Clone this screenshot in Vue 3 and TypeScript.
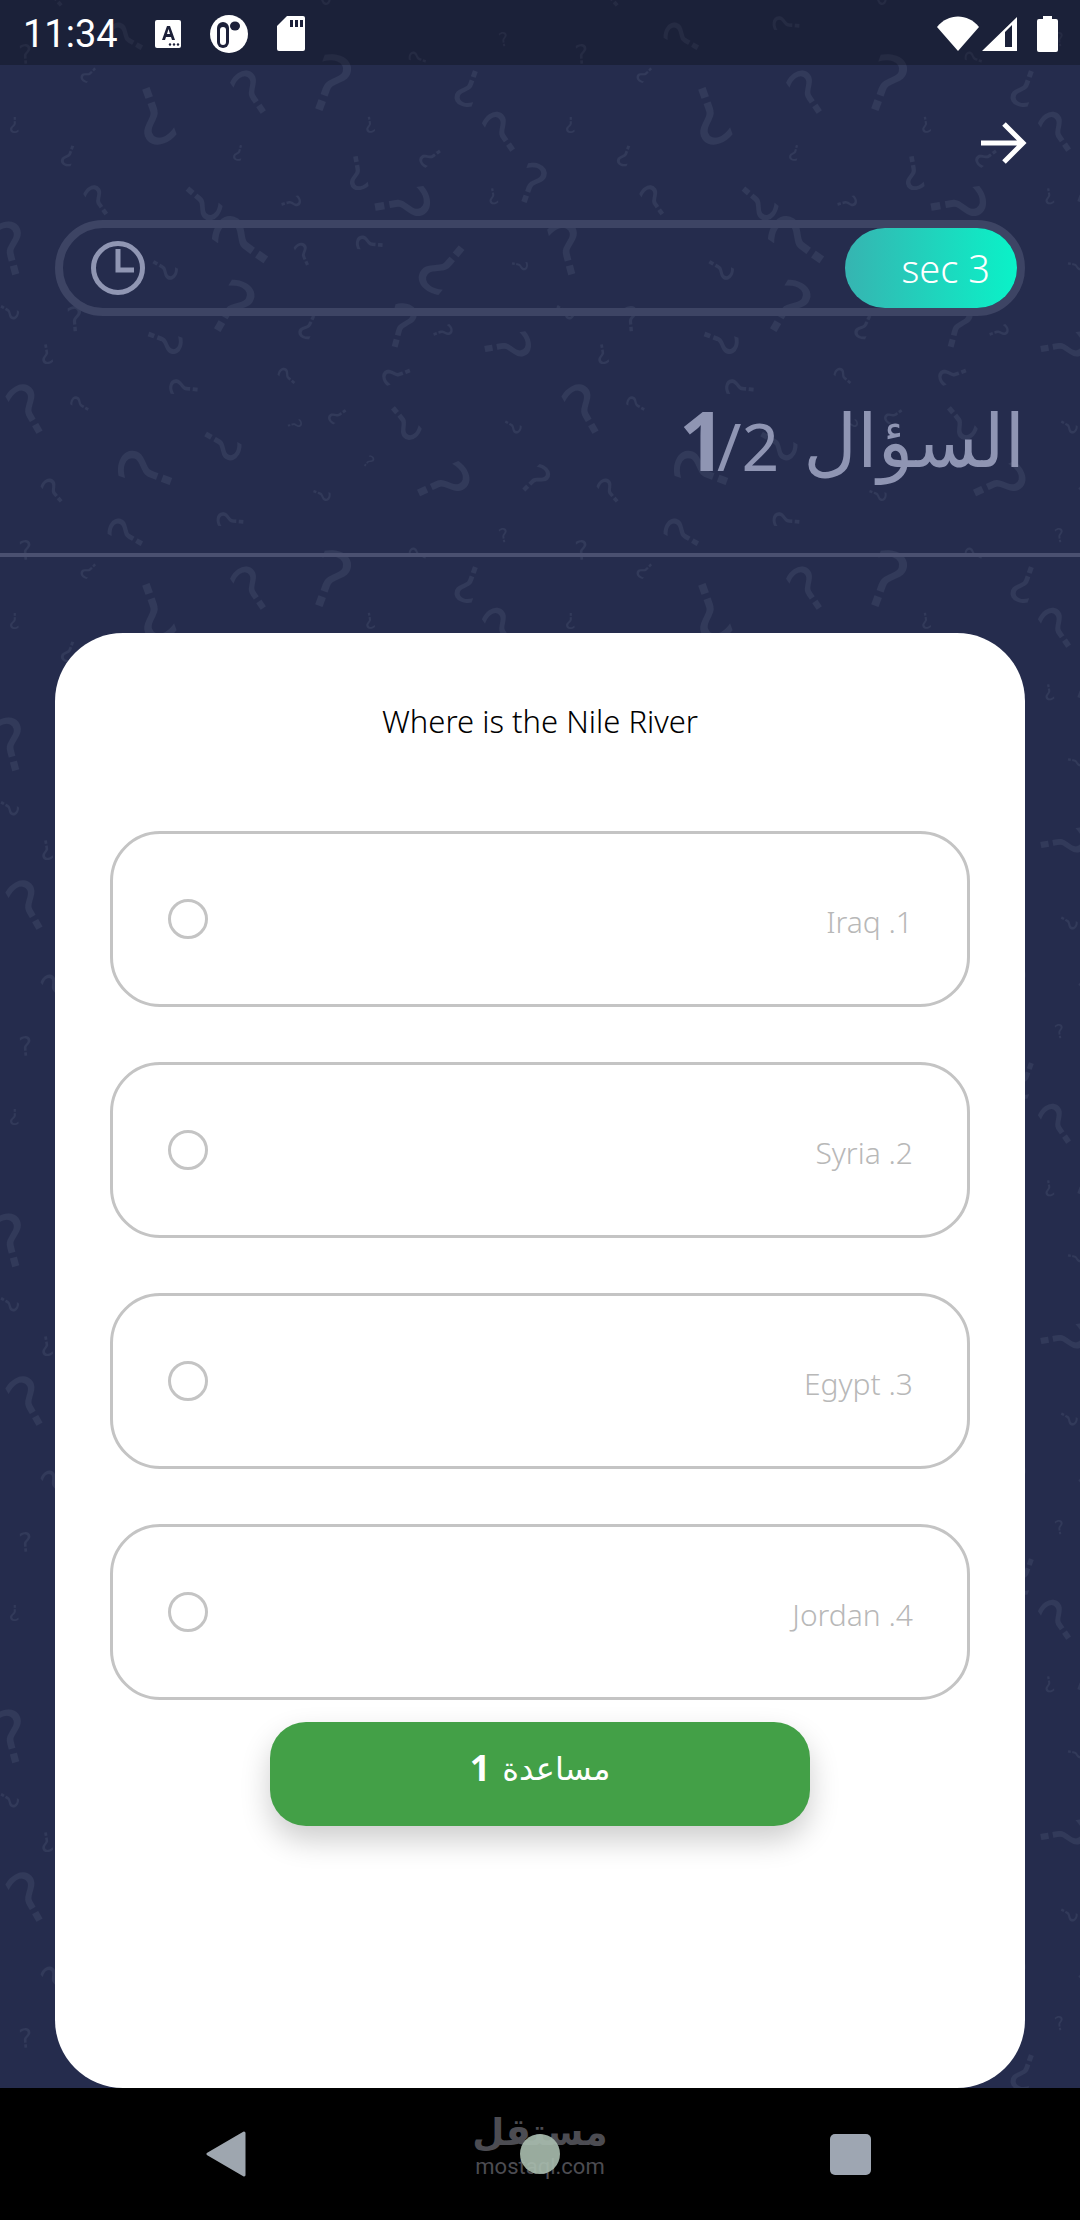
<template>
  <div class="screen">
    <!-- question mark wallpaper -->
    <svg class="wallpaper" width="1080" height="2220">
      <defs>
        <pattern id="marks" x="0" y="60" width="556" height="496" patternUnits="userSpaceOnUse">
          <text
            v-for="(m, i) in tileMarks" :key="i"
            class="mark"
            :font-size="m.size"
            :transform="`translate(${m.x} ${m.y}) rotate(${m.rot})`"
            text-anchor="middle"
            dy=".36em"
          >?</text>
        </pattern>
      </defs>
      <rect width="1080" height="2220" fill="#252c4d" />
      <rect width="1080" height="2220" fill="url(#marks)" />
    </svg>

    <!-- status bar -->
    <div class="status-bar">
      <div class="status-left">
        <span class="clock-text">11:34</span>
        <svg class="ic-a" width="26" height="28" viewBox="0 0 26 28">
          <path d="M2 0h22a2 2 0 0 1 2 2v24a2 2 0 0 1-2 2H2a2 2 0 0 1-2-2V2a2 2 0 0 1 2-2z" fill="#fff" />
          <path d="M7 20l5-14h3l5 14h-3l-1-3h-5l-1 3zM12 14h3l-1.5-5z" fill="#1c2039" fill-rule="evenodd" />
          <circle cx="15" cy="24.5" r="1.2" fill="#1c2039" />
          <circle cx="19" cy="24.5" r="1.2" fill="#1c2039" />
          <circle cx="23" cy="24.5" r="1.2" fill="#1c2039" />
        </svg>
        <svg class="ic-o" width="38" height="38" viewBox="0 0 38 38">
          <circle cx="19" cy="19" r="19" fill="#fff" />
          <rect x="7" y="7" width="12" height="26" rx="6" fill="#1c2039" />
          <rect x="10" y="12" width="6" height="18" rx="3" fill="#fff" />
          <ellipse cx="25" cy="11" rx="5" ry="4.5" fill="#1c2039" />
        </svg>
        <svg class="ic-sd" width="28" height="35" viewBox="0 0 28 35">
          <path d="M10 0h16a2 2 0 0 1 2 2v31a2 2 0 0 1-2 2H2a2 2 0 0 1-2-2V10z" fill="#fff" />
          <rect x="13" y="4" width="3" height="7" fill="#1c2039" />
          <rect x="18" y="4" width="3" height="7" fill="#1c2039" />
          <rect x="23" y="4" width="3" height="7" fill="#1c2039" />
        </svg>
      </div>
      <div class="status-right">
        <svg width="42" height="35" viewBox="0 0 42 35">
          <path d="M0 11C11 -3 31 -3 42 11L21 35z" fill="#fff" />
        </svg>
        <svg width="35" height="34" viewBox="0 0 35 34">
          <path d="M35 0V34H0zM30 8l-7 7V30H30z" fill="#fff" fill-rule="evenodd" />
        </svg>
        <svg class="ic-bat" width="21" height="36" viewBox="0 0 21 36">
          <path d="M6 0h9v3h4a2 2 0 0 1 2 2v29a2 2 0 0 1-2 2H2a2 2 0 0 1-2-2V5a2 2 0 0 1 2-2h4z" fill="#fff" />
        </svg>
      </div>
    </div>

    <div class="main">
      <div class="top-row">
        <svg width="48" height="44" viewBox="0 0 48 44">
          <path d="M2 22H44M25 3L44 22L25 41" fill="none" stroke="#fff" stroke-width="5" />
        </svg>
      </div>

      <!-- timer -->
      <div class="timer">
        <svg width="54" height="54" viewBox="0 0 54 54">
          <circle cx="27" cy="27" r="24.5" fill="none" stroke="#9096b3" stroke-width="5" />
          <path d="M27 8V29H43" fill="none" stroke="#9096b3" stroke-width="5" />
        </svg>
        <div class="timer-pill">sec 3</div>
      </div>

      <div class="title-row">
        <span class="count"><b>1</b>/2</span>
        <span class="title-ar">السؤال</span>
      </div>
      <div class="divider"></div>

      <!-- question card -->
      <div class="card">
        <p class="question">Where is the Nile River</p>
        <div class="options">
          <div v-for="o in options" :key="o" class="option">
            <span class="radio"></span>
            <span class="option-text">{{ o }}</span>
          </div>
        </div>
        <button class="help-btn">
          <span class="help-num">1</span>
          <span>مساعدة</span>
        </button>
      </div>
    </div>

    <!-- android nav -->
    <div class="nav">
      <svg width="40" height="46" viewBox="0 0 40 46">
        <path d="M38 2L2 23L38 44z" fill="#9ea6af" stroke="#9ea6af" stroke-width="3" stroke-linejoin="round" />
      </svg>
      <span class="nav-circle"></span>
      <span class="nav-square"></span>
      <div class="watermark">
        <span class="wm-ar">مستقل</span>
        <span class="wm-en">mostaql.com</span>
      </div>
    </div>
  </div>
</template>

<script setup lang="ts">
// marks as read off the crop: x, y (crop px), size, rotation
const raw: [number, number, number, number][] = [
  [925, 65, 65, 20], [705, 88, 52, -35], [430, 150, 65, 160], [1310, 75, 42, 200],
  [40, 175, 18, 180], [1035, 175, 18, 170], [248, 38, 20, 225], [1405, 195, 48, -35],
  [1000, 305, 38, 170], [1205, 262, 26, 235], [192, 258, 24, 200], [668, 250, 18, 195],
  [1490, 335, 46, 20], [1380, 368, 18, 170], [275, 380, 36, -35], [565, 385, 46, 130],
  [815, 385, 22, 75], [1125, 390, 62, 80], [680, 490, 68, -55], [850, 525, 26, -25],
  [1035, 495, 30, -85], [1240, 560, 62, 220], [1455, 555, 18, 100], [30, 510, 60, -15],
  [460, 565, 30, 120], [650, 670, 62, 30], [210, 700, 28, -5], [25, 680, 22, 120],
  [1125, 720, 50, 15], [862, 720, 28, 205], [1240, 735, 22, 70], [460, 760, 40, 110],
  [1420, 775, 52, 80], [130, 795, 22, 170], [1110, 850, 32, 250], [805, 855, 22, -50],
  [515, 885, 32, -85], [80, 945, 58, -30], [225, 930, 22, -60], [945, 960, 22, 235],
  [825, 985, 16, 75], [1130, 980, 42, 140], [1435, 990, 20, 120], [620, 1040, 44, 120],
  [1033, 1085, 14, 40], [410, 1110, 62, -70], [1240, 1145, 60, 65], [1500, 1135, 36, 45],
  [150, 1165, 30, -40], [900, 1175, 20, 110], [645, 1243, 30, -85], [355, 1280, 42, -60],
  [1410, 1285, 16, -10], [72, 1325, 22, -5], [1170, 1335, 20, -70],
]

const base = raw.map(([zx, zy, size, rot]) => ({ x: zx / 2.8, y: zy / 2.703, size: size * 1.2, rot }))

// copies for marks that hang over the tile edge
const tileMarks = base.flatMap((m) => {
  const out = [m]
  if (m.x < 35) out.push({ ...m, x: m.x + 556 })
  if (m.x > 521) out.push({ ...m, x: m.x - 556 })
  if (m.y < 35) out.push({ ...m, y: m.y + 496 })
  if (m.y > 461) out.push({ ...m, y: m.y - 496 })
  return out
})

const options = ['Iraq .1', 'Syria .2', 'Egypt .3', 'Jordan .4']
</script>

<style scoped>
.screen {
  position: relative;
  display: flex;
  flex-direction: column;
  width: 1080px;
  height: 2220px;
  overflow: hidden;
  font-family: "Noto Sans", "DejaVu Sans", sans-serif;
}

.wallpaper {
  position: absolute;
  inset: 0;
}

.mark {
  fill: #323a5a;
  font-family: "DejaVu Sans", sans-serif;
}

/* status bar */
.status-bar {
  position: relative;
  display: flex;
  align-items: center;
  justify-content: space-between;
  height: 65px;
  padding: 2px 22px 0 23px;
  box-sizing: border-box;
  background: rgba(0, 0, 0, 0.25);
  flex-shrink: 0;
}

.status-left,
.status-right {
  display: flex;
  align-items: center;
}

.clock-text {
  width: 132px;
  font-family: Roboto, sans-serif;
  font-size: 38px;
  color: #fff;
  line-height: 1;
}

.ic-o { margin-left: 29px; }
.ic-sd { margin-left: 29px; }
.status-right svg { margin-left: 3px; }
.status-right .ic-bat { margin-left: 20px; }

.main {
  position: relative;
  display: flex;
  flex-direction: column;
  flex: 1;
  min-height: 0;
}

.top-row {
  display: flex;
  justify-content: flex-end;
  padding: 56px 53px 0 0;
  height: 100px;
  box-sizing: border-box;
}

.timer {
  display: flex;
  align-items: center;
  justify-content: space-between;
  height: 96px;
  margin: 55px 55px 0;
  padding-left: 28px;
  box-sizing: border-box;
  border: 8px solid #3d4464;
  border-radius: 48px;
}

.timer-pill {
  display: flex;
  align-items: center;
  justify-content: flex-end;
  width: 172px;
  height: 80px;
  padding-right: 27px;
  box-sizing: border-box;
  border-radius: 40px;
  background: linear-gradient(90deg, #36b4b1, #0af2c8);
  color: #fff;
  font-size: 38px;
  font-weight: 300;
  white-space: nowrap;
}

.title-row {
  display: flex;
  align-items: center;
  justify-content: flex-end;
  gap: 24px;
  height: 237px;
  padding: 8px 55px 0 0;
  box-sizing: border-box;
  color: #8f95b3;
}

.count {
  font-size: 66px;
  line-height: 1;
}

.count b {
  font-size: 82px;
  letter-spacing: -9px;
}

.title-ar {
  font-size: 74px;
  line-height: 1;
}

.divider {
  height: 4px;
  background: #4a5070;
  flex-shrink: 0;
}

/* card */
.card {
  display: flex;
  flex-direction: column;
  align-items: center;
  flex: 1;
  margin: 76px 55px 0;
  padding: 0 55px;
  background: #fff;
  border-radius: 68px;
}

.question {
  margin: 66px 0 0;
  height: 132px;
  font-size: 31px;
  font-weight: 300;
  line-height: 44px;
  color: #000;
}

.options {
  display: flex;
  flex-direction: column;
  gap: 55px;
  width: 100%;
}

.option {
  display: flex;
  align-items: center;
  justify-content: space-between;
  height: 176px;
  padding: 0 54px 0 55px;
  box-sizing: border-box;
  border: 3px solid #c4c4c4;
  border-radius: 50px;
}

.radio {
  width: 40px;
  height: 40px;
  box-sizing: border-box;
  border: 3px solid #c4c4c4;
  border-radius: 50%;
}

.option-text {
  padding-top: 4px;
  font-size: 30px;
  font-weight: 300;
  color: #b8b8b8;
}

.help-btn {
  display: flex;
  align-items: center;
  justify-content: center;
  gap: 12px;
  width: 540px;
  height: 104px;
  margin-top: 22px;
  padding: 0 0 14px;
  border: none;
  border-radius: 36px;
  background: #43a047;
  box-shadow: 0 14px 30px rgba(0, 0, 0, 0.2);
  color: #fff;
  font-family: "Noto Sans", "DejaVu Sans", sans-serif;
  font-size: 32px;
}

.help-num {
  font-size: 36px;
  font-weight: 700;
}

/* nav bar */
.nav {
  position: relative;
  display: flex;
  align-items: center;
  justify-content: space-between;
  height: 132px;
  padding: 0 209px 0 206px;
  box-sizing: border-box;
  background: #000;
  flex-shrink: 0;
}

.nav-circle {
  position: relative;
  z-index: 1;
  width: 40px;
  height: 40px;
  margin-left: 4px;
  border-radius: 50%;
  background: rgba(170, 190, 175, 0.9);
}

.nav-square {
  width: 41px;
  height: 41px;
  border-radius: 5px;
  background: #9ea6b2;
}

.watermark {
  position: absolute;
  left: 474px;
  top: 22px;
  display: flex;
  flex-direction: column;
  align-items: center;
  width: 132px;
  color: #4c4c52;
}

.wm-ar {
  font-family: "DejaVu Sans", sans-serif;
  font-size: 37px;
  font-weight: 700;
  line-height: 46px;
}

.wm-en {
  font-family: Roboto, sans-serif;
  font-size: 22px;
  line-height: 22px;
}
</style>

<style>
html, body {
  margin: 0;
  padding: 0;
}
</style>
